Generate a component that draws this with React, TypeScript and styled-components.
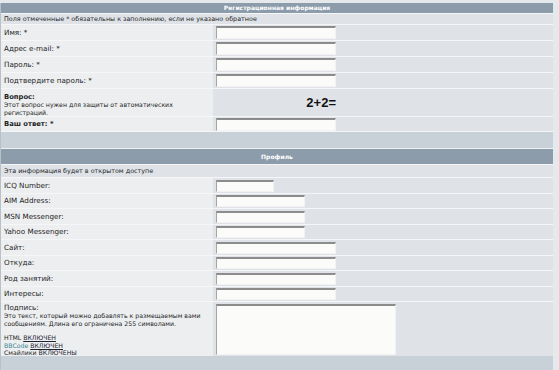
import styled, { createGlobalStyle } from "styled-components";

const GlobalStyle = createGlobalStyle`
  body {
    margin: 0;
    background: #e6e9ec;
    font-family: "DejaVu Sans", Verdana, sans-serif;
    color: #1e1e1e;
  }
`;

const Page = styled.div`
  width: 559px;
  height: 370px;
  overflow: hidden;
  padding-top: 3px;
  box-sizing: border-box;
`;

const Form = styled.div`
  width: 553px;
  display: flex;
  flex-direction: column;
  border-left: 1px solid #b9c1c8;
  box-sizing: border-box;
  white-space: nowrap;
`;

const Header = styled.div<{ $h: number }>`
  height: ${(p) => p.$h}px;
  line-height: ${(p) => p.$h}px;
  background: #8d9cab;
  color: #fff;
  font-weight: bold;
  font-size: 6px;
  text-align: center;
  border-bottom: 1px solid #f4f6f7;
`;

const Band = styled.div<{ $h: number }>`
  height: ${(p) => p.$h}px;
  background: #c8d0d8;
  border-bottom: 1px solid #eef1f3;
`;

const Hint = styled.div<{ $h: number }>`
  height: ${(p) => p.$h}px;
  line-height: ${(p) => p.$h}px;
  background: #dfe3e8;
  font-size: 6.4px;
  padding-left: 3px;
  border-bottom: 1px solid #f4f6f7;
`;

const Row = styled.div<{ $h: number }>`
  display: grid;
  grid-template-columns: 212px 1fr;
  height: ${(p) => p.$h}px;
  border-bottom: 1px solid #f4f6f7;
`;

const Label = styled.div<{ $bold?: boolean; $top?: number }>`
  background: #eceef0;
  font-size: ${(p) => (p.$bold ? 6.8 : 7.2)}px;
  font-weight: ${(p) => (p.$bold ? "bold" : "normal")};
  padding-left: 3px;
  display: flex;
  flex-direction: column;
  justify-content: ${(p) => (p.$top !== undefined ? "flex-start" : "center")};
  padding-top: ${(p) => p.$top ?? 0}px;
  box-sizing: border-box;
  line-height: 8px;
`;

const Note = styled.div`
  font-size: 6.2px;
  font-weight: normal;
  line-height: 7.5px;
`;

const Cell = styled.div`
  background: #dfe3e8;
  padding-left: 3px;
  display: flex;
  align-items: center;
`;

const Input = styled.div<{ $w: number; $h?: number }>`
  width: ${(p) => p.$w}px;
  height: ${(p) => p.$h ?? 13}px;
  background: #fbfbfa;
  border-top: 2px solid #8c8c8c;
  border-left: 1px solid #a5a5a5;
  border-right: 1px solid #f2f2f2;
  border-bottom: 1px solid #f2f2f2;
  box-sizing: border-box;
`;

const Captcha = styled.div`
  width: 120px;
  text-align: right;
  font-family: "Liberation Sans", Arial, sans-serif;
  font-weight: bold;
  font-size: 13px;
  color: #111;
`;

const Switches = styled.div`
  margin-top: 7px;
  font-size: 6.2px;
  line-height: 7.5px;
`;

const Link = styled.span`
  text-decoration: underline;
  color: #1e2430;
`;

const Teal = styled.span`
  color: #3d8a96;
`;

const fields = ["Имя: *", "Адрес e-mail: *", "Пароль: *", "Подтвердите пароль: *"];

const profile: [string, number][] = [
  ["ICQ Number:", 58],
  ["AIM Address:", 89],
  ["MSN Messenger:", 89],
  ["Yahoo Messenger:", 89],
  ["Сайт:", 120],
  ["Откуда:", 120],
  ["Род занятий:", 120],
  ["Интересы:", 120],
];

export default function App() {
  return (
    <Page>
      <GlobalStyle />
      <Form>
        <Header $h={10}>Регистрационная информация</Header>
        <Hint $h={10}>
          Поля отмеченные * обязательны к заполнению, если не указано обратное
        </Hint>
        {fields.map((label) => (
          <Row key={label} $h={15}>
            <Label>{label}</Label>
            <Cell>
              <Input $w={120} />
            </Cell>
          </Row>
        ))}
        <Row $h={27}>
          <Label $bold $top={4}>
            Вопрос:
            <Note>
              Этот вопрос нужен для защиты от автоматических
              <br />
              регистраций.
            </Note>
          </Label>
          <Cell>
            <Captcha>2+2=</Captcha>
          </Cell>
        </Row>
        <Row $h={14}>
          <Label $bold>Ваш ответ: *</Label>
          <Cell>
            <Input $w={120} />
          </Cell>
        </Row>
        <Band $h={16} />
        <Header $h={15}>Профиль</Header>
        <Hint $h={12}>Эта информация будет в открытом доступе</Hint>
        {profile.map(([label, w], i) => (
          <Row key={label} $h={i % 2 === 0 ? 15 : 14}>
            <Label>{label}</Label>
            <Cell>
              <Input $w={w} $h={12} />
            </Cell>
          </Row>
        ))}
        <Row $h={53}>
          <Label $top={2}>
            Подпись:
            <Note>
              Это текст, который можно добавлять к размещаемым вами
              <br />
              сообщениям. Длина его ограничена 255 символами.
            </Note>
            <Switches>
              HTML <Link>ВКЛЮЧЕН</Link>
              <br />
              <Teal>BBCode</Teal> <Link>ВКЛЮЧЕН</Link>
              <br />
              Смайлики <Link>ВКЛЮЧЕНЫ</Link>
            </Switches>
          </Label>
          <Cell>
            <Input $w={180} $h={51} />
          </Cell>
        </Row>
        <Band $h={20} />
      </Form>
    </Page>
  );
}
